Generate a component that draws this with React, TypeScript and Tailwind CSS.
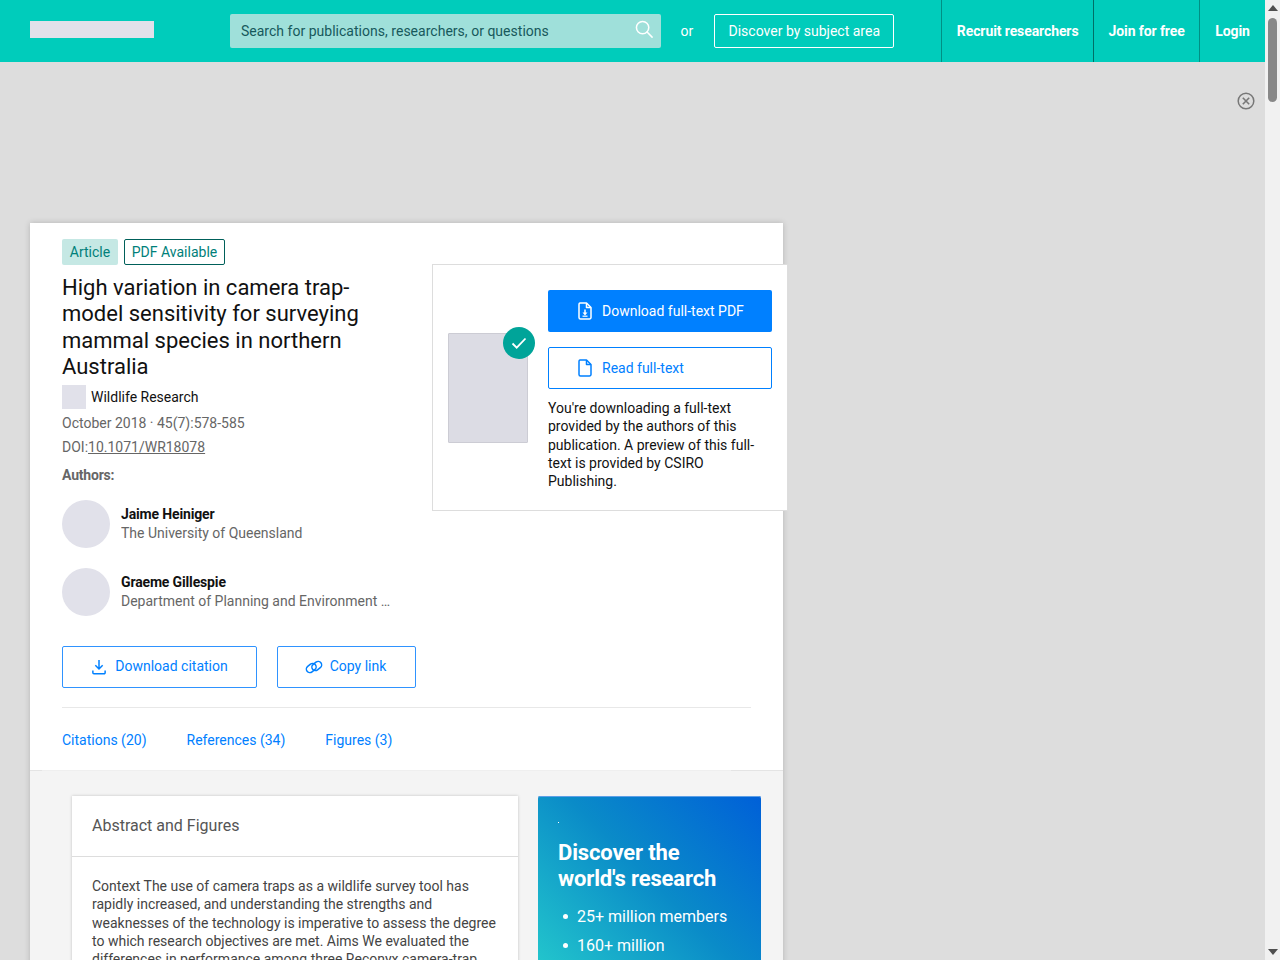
import React from "react";

function FileDown({ className }: { className: string }) {
  return (
    <svg viewBox="0 0 16 18" className={className} fill="none" stroke="currentColor" strokeWidth="1.5">
      <path d="M3 1h6.500L14 5.500V15.500a1.500 1.500 0 0 1-1.500 1.500h-9A1.500 1.500 0 0 1 2 15.500V2.500A1.500 1.500 0 0 1 3 1z" strokeLinejoin="round" />
      <path d="M9.500 1v4.500H14" strokeLinejoin="round" />
      <path d="M8 7.500v4" />
      <path d="M5.500 10.500h5L8 13.500z" fill="currentColor" stroke="none" />
      <path d="M5.500 14.200h5" strokeWidth="1.200" />
    </svg>
  );
}

function FilePlain({ className }: { className: string }) {
  return (
    <svg viewBox="0 0 16 18" className={className} fill="none" stroke="currentColor" strokeWidth="1.500">
      <path d="M3 1h6.500L14 5.500V15.500a1.500 1.500 0 0 1-1.500 1.500h-9A1.500 1.500 0 0 1 2 15.500V2.500A1.500 1.500 0 0 1 3 1z" strokeLinejoin="round" />
      <path d="M9.500 1v4.500H14" strokeLinejoin="round" />
    </svg>
  );
}

function Author({ name, org, className }: { name: string; org: string; className: string }) {
  return (
    <div className={`flex items-center gap-[11px] ${className}`}>
      <div className="w-[48px] h-[48px] rounded-full bg-[#e1e1ea]" />
      <div className="flex flex-col w-[270px]">
        <span className="text-[14px] leading-[19px] font-bold text-[#111111] tracking-[-0.15px]">{name}</span>
        <span className="text-[14px] leading-[19px] text-[#666666] truncate">{org}</span>
      </div>
    </div>
  );
}

export default function App() {
  return (
    <div className="flex w-[1280px] h-[960px] overflow-hidden bg-[#dddddd] font-['Roboto',sans-serif]">
      <div className="w-[1265px] h-[960px] shrink-0 flex flex-col overflow-hidden">
        <header className="h-[62px] shrink-0 bg-[#00ccbb] flex items-stretch text-white text-[14px]">
          <div className="ml-[30px] mt-[21px] w-[124px] h-[17px] bg-[#e1e1ea]" />
          <div className="ml-[76px] mt-[14px] w-[431px] h-[34px] rounded-[2px] bg-[#9fe0da] flex items-center justify-between pl-[11px] pr-[7px]">
            <span className="text-[#17595c] tracking-[0.02px]">Search for publications, researchers, or questions</span>
            <svg viewBox="0 0 20 20" className="w-[19px] h-[19px] mb-[3px] text-white" fill="none" stroke="currentColor" strokeWidth="1.600">
              <circle cx="8" cy="8" r="6.500" />
              <path d="M12.700 12.700L18 18" strokeLinecap="round" />
            </svg>
          </div>
          <span className="ml-[20px] self-center">or</span>
          <div className="ml-[21px] mt-[14px] w-[180px] h-[34px] rounded-[2px] border border-white flex items-center justify-center">
            Discover by subject area
          </div>
          <div className="ml-[47px] w-[152px] border-l border-[#008f84] flex items-center justify-center font-bold tracking-[-0.1px]">
            Recruit researchers
          </div>
          <div className="w-[106px] border-l border-[#006f66] flex items-center justify-center font-bold tracking-[-0.1px]">
            Join for free
          </div>
          <div className="w-[66px] border-l border-[#008f84] flex items-center justify-center font-bold tracking-[-0.1px]">
            Login
          </div>
        </header>

        <div className="h-[161px] shrink-0 flex justify-end pr-[10px] pt-[30px]">
          <svg viewBox="0 0 18 18" className="w-[18px] h-[18px] text-[#777777]" fill="none" stroke="currentColor" strokeWidth="1.500">
            <circle cx="9" cy="9" r="7.800" />
            <path d="M5.800 5.800l6.400 6.400M12.200 5.800l-6.400 6.400" strokeWidth="1.600" />
          </svg>
        </div>

        <main className="relative ml-[30px] w-[753px] bg-white shadow-[0_0_6px_rgba(0,0,0,0.18)] flex flex-col grow">
          <section className="h-[547px] shrink-0 px-[32px] pt-[16px]">
            <div className="flex gap-[6px]">
              <span className="h-[26px] w-[56px] rounded-[2px] bg-[#c5e8e4] text-[#00807a] text-[14px] flex items-center justify-center">Article</span>
              <span className="h-[26px] w-[101px] rounded-[2px] border border-[#00605a] text-[#00807a] text-[14px] flex items-center justify-center">PDF Available</span>
            </div>
            <h1 className="mt-[10px] w-[340px] text-[22px] leading-[26.400px] font-normal text-[#111111]">
              High variation in camera trap-model sensitivity for surveying mammal species in northern Australia
            </h1>
            <div className="mt-[4px] flex items-center gap-[5px]">
              <div className="w-[24px] h-[24px] bg-[#e1e1ea]" />
              <span className="pt-[2px] text-[14px] text-[#111111]">Wildlife Research</span>
            </div>
            <p className="mt-[5px] text-[14px] leading-[19px] text-[#666666]">October 2018 · 45(7):578-585</p>
            <p className="mt-[5px] text-[14px] leading-[19px] text-[#666666]">
              DOI:<span className="underline">10.1071/WR18078</span>
            </p>
            <p className="mt-[9px] text-[14px] leading-[19px] font-bold text-[#666666] tracking-[-0.2px]">Authors:</p>
            <Author className="mt-[15px]" name="Jaime Heiniger" org="The University of Queensland" />
            <Author className="mt-[20px]" name="Graeme Gillespie" org="Department of Planning and Environment ..." />
            <div className="mt-[30px] flex gap-[20px] text-[14px] text-[#0080ff]">
              <div className="w-[195px] h-[42px] rounded-[2px] border border-[#2f93ff] flex items-center justify-center gap-[9px] pl-[1px]">
                <svg viewBox="0 0 16 18" className="w-[14px] h-[16px]" fill="none" stroke="currentColor" strokeWidth="1.700">
                  <path d="M8 1v10M3.800 7l4.200 4.300L12.200 7" />
                  <path d="M1 13v2.500a1.200 1.200 0 0 0 1.200 1.200h11.600a1.200 1.200 0 0 0 1.200-1.200V13" />
                </svg>
                Download citation
              </div>
              <div className="w-[139px] h-[42px] rounded-[2px] border border-[#2f93ff] flex items-center justify-center gap-[7px] pr-[2px]">
                <svg viewBox="0 0 18 14" className="w-[18px] h-[14px]" fill="none" stroke="currentColor" strokeWidth="1.500">
                  <rect x="1" y="4.500" width="10.500" height="7" rx="3.500" transform="rotate(-38 6.250 8)" />
                  <rect x="6.500" y="2.500" width="10.500" height="7" rx="3.500" transform="rotate(-38 11.750 6)" />
                </svg>
                Copy link
              </div>
            </div>
            <div className="mt-[19px] h-px bg-[#e8e8e8]" />
            <nav className="mt-[23px] flex gap-[40px] text-[14px] leading-[19px] text-[#0080ff]">
              <span>Citations (20)</span>
              <span>References (34)</span>
              <span>Figures (3)</span>
            </nav>
          </section>

          <div className="h-px shrink-0 flex">
            <div className="w-[12px] bg-[#e4e4e4]" />
            <div className="grow bg-[#efefef]" />
            <div className="w-[52px] bg-[#e4e4e4]" />
          </div>

          <section className="grow bg-[#f4f4f4] pl-[42px] pt-[25px] flex gap-[20px]">
            <article className="w-[446px] h-[300px] shrink-0 bg-white shadow-[0_0_3px_rgba(0,0,0,0.2)]">
              <h2 className="h-[61px] px-[20px] border-b border-[#dddddd] flex items-center text-[16px] text-[#555555] font-normal">Abstract and Figures</h2>
              <p className="px-[20px] pt-[20px] text-[14px] leading-[18.300px] text-[#444444]">
                Context The use of camera traps as a wildlife survey tool has rapidly increased, and understanding the strengths and weaknesses of the technology is imperative to assess the degree to which research objectives are met. Aims We evaluated the differences in performance among three Reconyx camera-trap
              </p>
            </article>
            <aside className="w-[223px] h-[300px] shrink-0 rounded-t-[2px] shadow-[inset_0_1px_0_#5d9fe6] bg-[linear-gradient(45deg,#22c4cc_26%,#0a8bc8_63%,#0060d8_100%)] text-white pl-[20px] pt-[26px]">
              <div className="w-px h-px bg-white" />
              <h2 className="mt-[17px] text-[22px] leading-[26.400px] font-bold tracking-[-0.15px]">Discover the<br />world's research</h2>
              <ul className="mt-[9px] text-[16px] leading-[19px]">
                <li className="flex items-center gap-[9px] h-[29px]"><span className="w-[5px] h-[5px] ml-[5px] rounded-full bg-white" />25+ million members</li>
                <li className="flex items-center gap-[9px] h-[29px]"><span className="w-[5px] h-[5px] ml-[5px] rounded-full bg-white" />160+ million</li>
              </ul>
            </aside>
          </section>

          <div className="absolute left-[402px] top-[41px] w-[356px] h-[247px] bg-white border border-[#dddddd] flex">
            <div className="relative ml-[15px] mt-[68px] w-[80px] h-[110px] rounded-[1px] bg-[#dcdce4] border border-[#ccccd4]">
              <div className="absolute -right-[8px] -top-[7px] w-[32px] h-[32px] rounded-full bg-[#00a499] flex items-center justify-center">
                <svg viewBox="0 0 16 16" className="w-[16px] h-[16px]" fill="none" stroke="white" strokeWidth="1.800">
                  <path d="M1.500 8.500l4.200 4.200L14.500 3.500" />
                </svg>
              </div>
            </div>
            <div className="ml-[20px] mt-[25px] w-[224px] flex flex-col text-[14px]">
              <div className="h-[42px] rounded-[2px] bg-[#0080ff] text-white flex items-center pl-[29px] gap-[9px]">
                <FileDown className="w-[16px] h-[18px]" />
                Download full-text PDF
              </div>
              <div className="mt-[15px] h-[42px] rounded-[2px] border border-[#0080ff] text-[#0080ff] flex items-center pl-[28px] gap-[9px]">
                <FilePlain className="w-[16px] h-[18px]" />
                Read full-text
              </div>
              <p className="mt-[10px] leading-[18.300px] text-[#111111]">
                You're downloading a full-text provided by the authors of this publication. A preview of this full-text is provided by CSIRO Publishing.
              </p>
            </div>
          </div>
        </main>
      </div>

      <div className="w-[15px] h-[960px] shrink-0 bg-[#f1f1f1] flex flex-col items-center justify-between">
        <div className="flex flex-col items-center w-full">
          <svg viewBox="0 0 10 6" className="w-[10px] h-[6px] mt-[5px] text-[#505050]" fill="currentColor"><path d="M5 0l5 6H0z" /></svg>
          <div className="mt-[7px] w-[9px] h-[84px] rounded-full bg-[#888888]" />
        </div>
        <svg viewBox="0 0 10 6" className="w-[10px] h-[6px] mb-[5px] text-[#505050]" fill="currentColor"><path d="M5 6L0 0h10z" /></svg>
      </div>
    </div>
  );
}
